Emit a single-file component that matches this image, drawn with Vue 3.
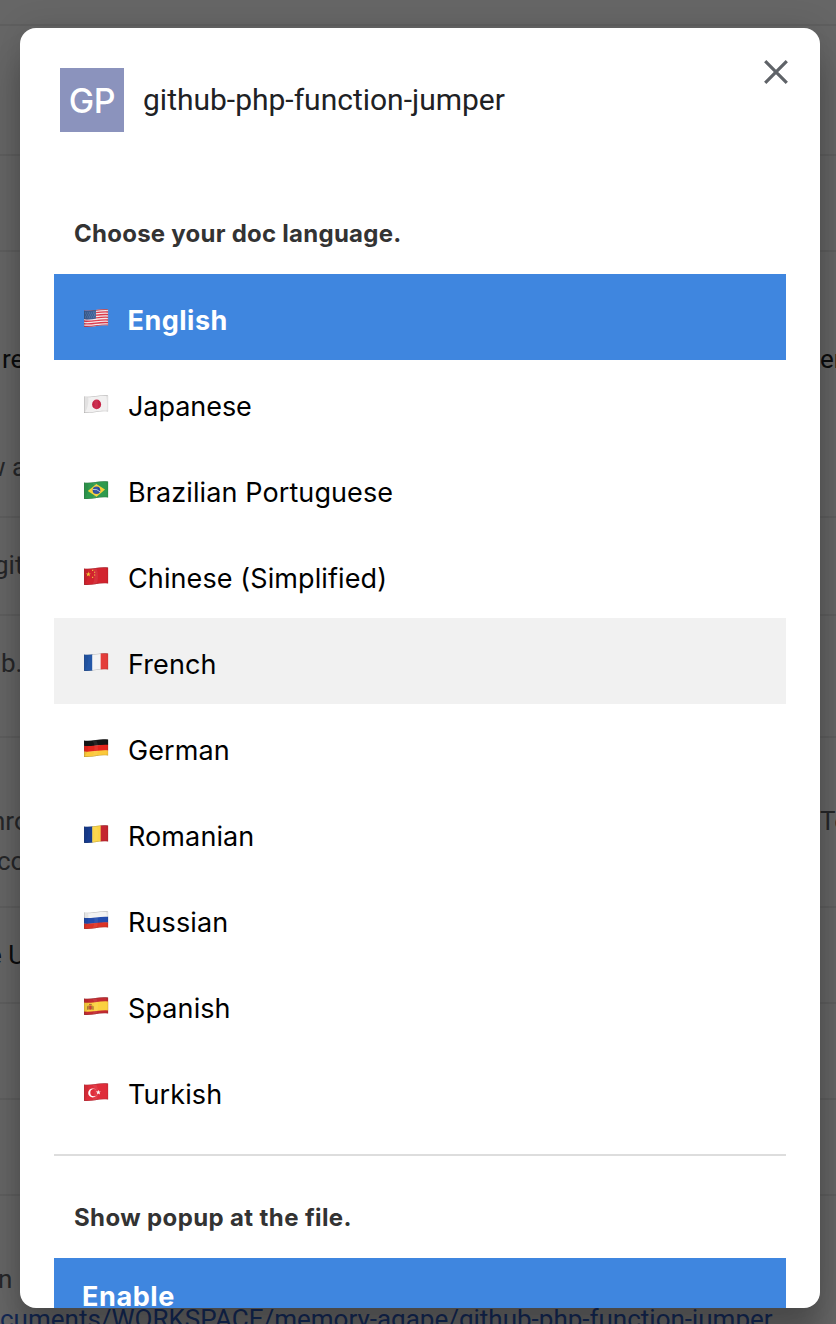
<script setup>
const wave = (y) => `M-1 ${y + 1} C8 ${y + 2.6} 15 ${y - 1.2} 26 ${y + 0.2}`

const languages = [
  { name: 'English', cls: 'en', active: true },
  { name: 'Japanese', cls: 'ja' },
  { name: 'Brazilian Portuguese', cls: 'pt' },
  { name: 'Chinese (Simplified)', cls: 'zh' },
  { name: 'French', cls: 'fr', columns: ['#2457a7', '#f4f4f4', '#e43d3a'], hover: true },
  { name: 'German', cls: 'de', bands: ['#151515', '#e5251c', '#fbc93b'] },
  { name: 'Romanian', cls: 'ro', columns: ['#173c8f', '#fbd444', '#c4252f'] },
  { name: 'Russian', cls: 'ru', bands: ['#f3f3f3', '#234cad', '#dc3427'] },
  { name: 'Spanish', cls: 'es' },
  { name: 'Turkish', cls: 'tr' },
]

const rows = [
  { id: 'a', h: 26 },
  { id: 'b', h: 130 },
  { id: 'c', h: 96 },
  { id: 'd', h: 266, lines: [{ t: 're', r: 'er', k: 'd1' }, { t: 'w a', k: 'd2' }] },
  { id: 'e', h: 98, lines: [{ t: 'git', k: 'e1' }] },
  { id: 'f', h: 122, lines: [{ t: 'b.', k: 'f1' }] },
  { id: 'g', h: 170, lines: [{ t: 'hro', r: 'To', k: 'g1' }, { t: 'co', k: 'g2' }] },
  { id: 'h', h: 96, lines: [{ t: 'e U', k: 'h1' }] },
  { id: 'i', h: 96 },
  { id: 'j', h: 96 },
  {
    id: 'k',
    h: 160,
    lines: [
      { t: 'n', k: 'k1' },
      { t: 'cuments/WORKSPACE/memory-agape/github-php-function-jumper', k: 'k2' },
    ],
  },
]
</script>

<template>
  <div class="screen">
    <div class="page">
      <div v-for="r in rows" :key="r.id" class="page-row" :style="{ height: r.h + 'px' }">
        <div v-for="l in r.lines" :key="l.k" class="page-line" :class="l.k">
          <span class="start">{{ l.t }}</span>
          <span v-if="l.r" class="end">{{ l.r }}</span>
        </div>
      </div>
    </div>
    <div class="backdrop">
      <section class="dialog">
        <header class="head">
          <div class="logo">GP</div>
          <h1>github-php-function-jumper</h1>
          <button class="close" aria-label="Close">
            <svg width="24" height="24" viewBox="0 0 24 24"><path d="M1.2 1.2 22.8 22.8M22.8 1.2 1.2 22.8" stroke="#5f6368" stroke-width="3.2" fill="none" /></svg>
          </button>
        </header>
        <div class="body">
          <h2 class="h-lang">Choose your doc language.</h2>
          <ul>
            <li v-for="l in languages" :key="l.name" :class="[l.cls, { active: l.active, hover: l.hover }]">
              <svg class="flag" width="25" height="19" viewBox="0 0 25 19">
                <template v-if="l.bands">
                  <path v-for="(c, i) in l.bands" :key="i" :d="wave(3 + i * 5.7)" :stroke="c" stroke-width="6" fill="none" />
                </template>
                <template v-else-if="l.columns">
                  <rect v-for="(c, i) in l.columns" :key="i" :x="i * 8.33" width="8.6" height="19" :fill="c" />
                </template>
                <template v-else-if="l.cls === 'en'">
                  <rect width="25" height="19" fill="#f2e9ec" />
                  <path v-for="i in 7" :key="i" :d="wave(0.3 + (i - 1) * 2.65)" stroke="#dc3a4c" stroke-width="1.35" fill="none" />
                  <path d="M0 0H12V9.6C8 10.6 4 11 0 10Z" fill="#3d6096" />
                  <path d="M1 4H11M2 6H11M1 8H11" stroke="#7c9ac2" stroke-width=".7" stroke-dasharray=".8 1.2" />
                </template>
                <template v-else-if="l.cls === 'ja'">
                  <rect width="25" height="19" fill="#f1f0f0" />
                  <ellipse cx="12.6" cy="9.4" rx="4.5" ry="4.9" fill="#c62345" />
                </template>
                <template v-else-if="l.cls === 'pt'">
                  <rect width="25" height="19" fill="#2f9a4e" />
                  <path d="M3.8 10.1 12.4 3 21 8.4 12.6 15.8Z" fill="#f7d038" />
                  <circle cx="12.5" cy="9.3" r="3.8" fill="#29499c" />
                  <path d="M9 8.5Q13 7.6 16 10.8" stroke="#d7e3ef" stroke-width=".8" fill="none" />
                </template>
                <template v-else-if="l.cls === 'zh'">
                  <rect width="25" height="19" fill="#d2232e" />
                  <path d="m4.3 4.6.6 1.8h1.9L5.3 7.6l.6 1.8-1.6-1.1-1.5 1.1.5-1.8-1.5-1.2h2Z" fill="#f9d33b" />
                  <path d="M8 3.4h1.2M10 5.2h1.2M10 8h1.2M8 10.4h1.2" stroke="#eebc38" stroke-width="1.1" />
                </template>
                <template v-else-if="l.cls === 'es'">
                  <rect width="25" height="19" fill="#c32b31" />
                  <path :d="wave(8.9)" stroke="#fbd140" stroke-width="9" fill="none" />
                  <path d="M4.3 8.6h4.2v4H4.3Z" fill="#b96c35" />
                  <path d="M5 7.4h2.8M3.7 9.2v3.6M9.1 9.2v3.6" stroke="#946038" stroke-width=".9" />
                  <path d="M6.4 8.8v3.6" stroke="#d73738" stroke-width="1.3" />
                </template>
                <template v-else>
                  <rect width="25" height="19" fill="#df2d3a" />
                  <circle cx="8.7" cy="9.9" r="4.5" fill="#fff" />
                  <circle cx="9.9" cy="9.7" r="3.6" fill="#df2d3a" />
                  <path d="m14.3 6.7.6 1.8 1.9-.1-1.4 1.2.7 1.8-1.7-1-1.5 1.1.5-1.8-1.6-1.1 1.9-.1Z" fill="#fff" />
                </template>
                <path d="M0 0H4Q6 10 0 19ZM22 0H25V19H22Q24 9 22 0Z" fill="#000" opacity=".06" />
                <path d="M8 0Q13 9 8 19H12Q16 9 12 0Z" fill="#fff" opacity=".07" />
                <path d="M0 1.4C8 2.9 15-.8 24.6 .6V16.4C15 15.2 8 19 0 17.8Z" fill="none" stroke="#333" stroke-opacity=".28" stroke-width="1" />
              </svg>
              <span class="label">{{ l.name }}</span>
            </li>
          </ul>
          <hr />
          <h2 class="h-popup">Show popup at the file.</h2>
          <div class="enable">Enable</div>
        </div>
      </section>
    </div>
  </div>
</template>

<style>
html,
body {
  margin: 0;
  overflow: hidden;
}
</style>

<style scoped>
* {
  box-sizing: border-box;
}
.screen {
  position: relative;
  width: 836px;
  height: 1324px;
  overflow: hidden;
  background: #fff;
  font-family: Roboto, sans-serif;
}
.page {
  height: 1324px;
  overflow: hidden;
}
.page-row {
  border-bottom: 2px solid #ededed;
  overflow: hidden;
}
.page-line {
  display: flex;
  height: 40px;
  line-height: 40px;
  font-size: 26px;
  color: #5f6368;
  white-space: nowrap;
}
.start {
  width: 820px;
  flex: none;
}
.d1 { margin-top: 87px; color: #202124; text-indent: 2px; }
.d2 { margin-top: 68px; text-indent: -14px; }
.e1 { margin-top: 27px; text-indent: -6px; }
.f1 { margin-top: 27px; text-indent: 1px; }
.g1 { margin-top: 63px; text-indent: -9px; }
.g2 { text-indent: -3px; }
.h1 { margin-top: 27px; color: #202124; text-indent: -12px; }
.k1 { margin-top: 63px; text-indent: -2px; }
.k2 { color: #3367d6; }
.end { text-indent: 0; }
.backdrop {
  position: absolute;
  inset: 0;
  padding: 28px 16px 16px 20px;
  background: rgba(0, 0, 0, 0.6);
}
.dialog {
  width: 800px;
  height: 1280px;
  overflow: hidden;
  border-radius: 16px;
  background: #fff;
  box-shadow: 0 0 32px rgba(0, 0, 0, 0.12), 0 32px 32px rgba(0, 0, 0, 0.24);
}
.head {
  display: flex;
  align-items: flex-start;
  height: 164px;
  padding: 32px 32px 0 40px;
}
.logo {
  width: 64px;
  height: 64px;
  margin-top: 8px;
  background: #8b93bd;
  color: #fff;
  font: 500 34px/65px Inter, sans-serif;
  letter-spacing: -0.4px;
  text-align: center;
}
h1 {
  flex: 1;
  margin: 8px 0 0 19px;
  font-size: 30px;
  line-height: 64px;
  font-weight: 400;
  color: #202124;
}
.close {
  width: 24px;
  height: 24px;
  padding: 0;
  border: 0;
  background: none;
}
.close svg {
  display: block;
}
.body {
  padding: 0 34px;
  font-family: Inter, sans-serif;
}
h2 {
  margin: 0;
  padding-left: 20px;
  font-size: 24px;
  line-height: 30px;
  font-weight: 700;
  color: #333;
}
.h-lang {
  height: 82px;
  padding-top: 27px;
  letter-spacing: 0.25px;
}
.h-popup {
  height: 102px;
  padding-top: 47px;
  letter-spacing: 0.38px;
}
ul {
  margin: 0;
  padding: 0;
  list-style: none;
}
li {
  display: flex;
  height: 86px;
  padding: 0 29px;
  font-size: 27px;
  line-height: 94px;
  letter-spacing: 0.1px;
  color: #000;
}
.ja {
  letter-spacing: -0.05px;
}
.flag {
  flex: none;
  margin: 35px 19.5px 0 0.5px;
  clip-path: path('M0 1.4C8 2.9 15-.8 24.6 .6V16.4C15 15.2 8 19 0 17.8Z');
}
.active {
  background: #3f86df;
  color: #fff;
  font-weight: 700;
  letter-spacing: 0.5px;
}
.active .label {
  margin-left: -0.5px;
}
.hover {
  background: #f1f1f1;
}
hr {
  height: 2px;
  margin: 20px 0 0;
  border: 0;
  background: #ddd;
}
.enable {
  height: 86px;
  padding-left: 28px;
  background: #3f86df;
  color: #fff;
  font-size: 27px;
  line-height: 78px;
  font-weight: 700;
  letter-spacing: 0.6px;
}
</style>
